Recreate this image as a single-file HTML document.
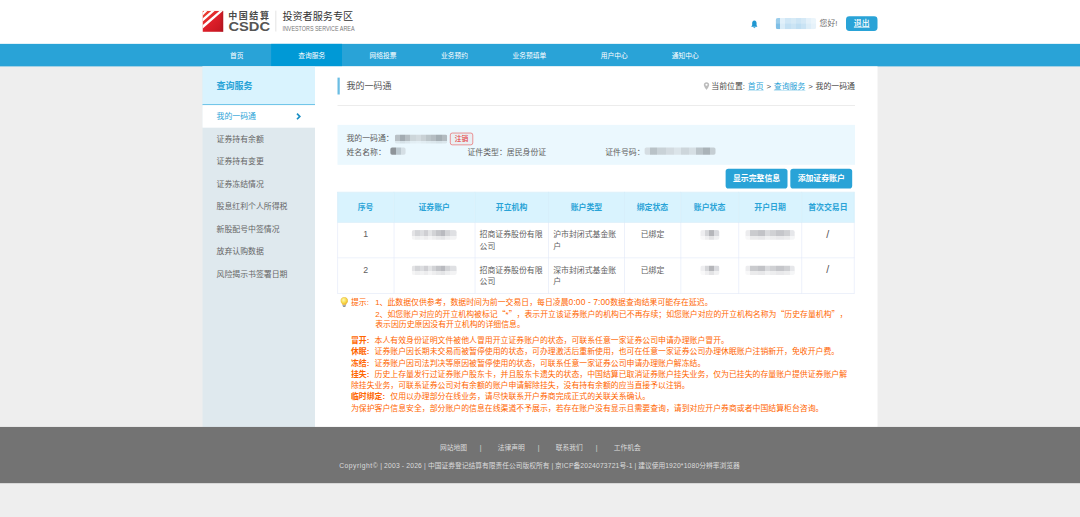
<!DOCTYPE html>
<html lang="zh-CN">
<head>
<meta charset="utf-8">
<title>我的一码通 - 投资者服务专区</title>
<style>
html,body{margin:0;padding:0;}
body{width:1080px;height:517px;overflow:hidden;background:#eeeeee;font-family:"Liberation Sans","Noto Sans CJK SC",sans-serif;}
#stage{position:absolute;left:0;top:0;width:1920px;height:919px;transform:scale(0.5625);transform-origin:0 0;background:#eeeeee;overflow:hidden;color:#606060;font-size:12px;}
#stage *{box-sizing:border-box;text-spacing-trim:space-all;}
.abs{position:absolute;white-space:nowrap;}
/* header */
#hdr{position:absolute;left:0;top:0;width:1920px;height:78px;background:#fff;}
#nav{position:absolute;left:0;top:78px;width:1920px;height:40.4px;background:#29a3d7;}
#nav .act{position:absolute;left:482px;top:0;width:126px;height:40.4px;background:#0099d6;}
#nav span{position:absolute;top:0;line-height:43px;color:#fff;font-size:12px;white-space:nowrap;}
/* logo */
#logo{position:absolute;left:359.5px;top:19px;width:37.5px;height:37.5px;}
.l1{left:405.7px;top:16.6px;font-size:16px;font-weight:700;color:#4a4a4a;line-height:24px;letter-spacing:2.8px;}
.l2{left:405.5px;top:36px;font-size:22px;font-weight:700;color:#555;line-height:24px;transform:scaleX(1.19);transform-origin:0 0;}
.ldiv{position:absolute;left:490px;top:19px;width:1px;height:37px;background:#ccc;}
.l3{left:502px;top:17px;font-size:18px;color:#333;line-height:24px;}
.l4{left:501.5px;top:43.6px;font-size:11.3px;color:#777;line-height:14px;transform:scaleX(0.85);transform-origin:0 0;}
/* user */
.hello{left:1457px;top:33px;font-size:14px;color:#707070;line-height:18px;}
.mask{position:absolute;border-radius:3px;}
.btn-exit{position:absolute;left:1504.4px;top:29px;width:55.2px;height:26px;background:#29a3d7;border-radius:6px;color:#fff;font-size:14px;font-weight:500;line-height:26.5px;text-align:center;text-decoration:underline;}
/* sidebar */
#side{position:absolute;left:360px;top:118px;width:200px;height:641px;background:#dfe9ee;}
#side .hd{position:absolute;left:0;top:0;width:200px;height:69px;background:#d9f3fe;border-bottom:2px solid #6cc3e8;}
#side .hd span{position:absolute;left:25px;top:24.4px;font-size:16px;font-weight:700;color:#29a3d7;line-height:24px;}
#side .it{position:absolute;left:0;width:200px;height:40px;line-height:40px;padding-left:25px;font-size:14px;color:#666;}
#side .it.on{background:#fff;color:#29a3d7;}
/* main */
#main{position:absolute;left:560px;top:118px;width:1000px;height:641px;background:#fff;}
.tbar{position:absolute;left:39.5px;top:20px;width:4px;height:30px;background:#6bbde3;}
.ttl{left:56px;top:24.4px;font-size:16px;color:#555;line-height:24px;}
.hr{position:absolute;left:40px;top:69px;width:920px;height:1px;background:#ddd;}
.crumb{right:40px;top:26px;font-size:14px;color:#484848;line-height:18px;word-spacing:1.15px;}
.crumb a{color:#29a3d7;text-decoration:underline;text-decoration-thickness:1px;text-decoration-color:rgba(41,163,215,.45);text-underline-offset:2px;}
.info{position:absolute;left:40px;top:104px;width:920px;height:71px;background:#ebf8fe;}
.info span{position:absolute;font-size:14px;color:#606060;line-height:24px;white-space:nowrap;}
.cancel{position:absolute;left:200px;top:13.5px;width:41px;height:22px;border:1.5px solid #e8474a;border-radius:4px;color:#e4393c;font-size:12px;font-weight:500;line-height:19px;text-align:center;background:#e9eff3;}
.btn{position:absolute;top:182px;width:110px;height:34.5px;background:#29a3d7;border-radius:5px;color:#fff;font-size:14px;font-weight:700;line-height:35.5px;text-align:center;}
/* table */
table{position:absolute;left:39.5px;top:223px;width:918.5px;border-collapse:collapse;table-layout:fixed;font-size:14px;color:#606060;}
th{height:53.5px;padding:0 0 1.5px;background:#d9f3fe;color:#29a3d7;font-weight:700;border:1px solid #cfeaf8;text-align:center;}
td{height:63px;border:1px solid #dfe6f7;text-align:center;vertical-align:top;padding:11.5px 8px 0;line-height:20px;}
td.n{font-size:15.5px;}
td.s{font-size:19px;color:#555;}
td.l{text-align:left;}
td i{display:inline-block;height:17px;border-radius:4px;margin-top:2px;vertical-align:top;}
td i.m1{background:linear-gradient(180deg,transparent 0 58%,rgba(255,255,255,.62) 58% 100%),linear-gradient(90deg,#e4e4e6 0 8%,#d4d5d8 8% 18%,#dcdde0 18% 27%,#cfcfd3 27% 36%,#e2e3e5 36% 45%,#d2d3d6 45% 55%,#c3c4c8 55% 65%,#b9babf 65% 75%,#d3d4d7 75% 86%,#dfe0e3 86% 100%);}
td i.m2{background:linear-gradient(180deg,transparent 0 58%,rgba(255,255,255,.62) 58% 100%),linear-gradient(90deg,#eeeef0 0 25%,#d5d6d9 25% 48%,#b5b6ba 48% 72%,#d9dade 72% 100%);}
td i.m3{background:linear-gradient(180deg,transparent 0 58%,rgba(255,255,255,.62) 58% 100%),linear-gradient(90deg,#ececee 0 10%,#cacbce 10% 25%,#c2c3c7 25% 40%,#d9dadd 40% 50%,#d0d1d4 50% 62%,#c5c6ca 62% 78%,#cfd0d3 78% 90%,#e6e7ea 90% 100%);}
/* tips */
.tips{position:absolute;left:0;top:0;color:#ff6600;font-size:14px;}
.tips div{position:absolute;white-space:nowrap;line-height:20px;left:64px;}
.tips b{font-weight:700;margin-right:5.4px;}
.d{font-size:15px;letter-spacing:.2px;}
.q{font-family:"Noto Sans CJK SC",sans-serif;}
/* footer */
#ftr{position:absolute;left:0;top:759px;width:1920px;height:100px;background:#737373;color:#dcdcdc;font-size:12px;}
#ftr span{position:absolute;white-space:nowrap;line-height:18px;}
#ftr em{font-style:normal;letter-spacing:.3px;}
</style>
</head>
<body>
<div id="stage">

<div id="hdr">
  <svg id="logo" viewBox="0 0 37.5 37.5">
    <defs><linearGradient id="lg" x1="0" y1="0" x2="1" y2="1"><stop offset="0" stop-color="#ee4a34"/><stop offset="0.45" stop-color="#e0202a"/><stop offset="1" stop-color="#c01420"/></linearGradient>
    <linearGradient id="lg2" x1="0" y1="0" x2="1" y2="0"><stop offset="0.8" stop-color="#8a1018" stop-opacity="0"/><stop offset="1" stop-color="#8a1018" stop-opacity="0.45"/></linearGradient></defs>
    <rect x="0" y="0" width="37.5" height="37.5" fill="url(#lg)"/>
    <rect x="0" y="0" width="37.5" height="37.5" fill="url(#lg2)"/>
    <path d="M0 3.5 L0 9 L9 0 L3.5 0 Z M0 14 L0 19.5 L22 0 L16 0 Z M0 26 L0 32 L36.5 0 L30.5 0 Z" fill="#fff"/>
    <path d="M36 0 L37.5 0 L37.5 2.2 L0 36 L0 34 Z" fill="#fff" opacity="0"/>
  </svg>
  <div class="abs l1">中国结算</div>
  <div class="abs l2">CSDC</div>
  <div class="ldiv"></div>
  <div class="abs l3">投资者服务专区</div>
  <div class="abs l4">INVESTORS SERVICE AREA</div>

  <svg class="abs" style="left:1335px;top:34.6px;width:12.2px;height:16.4px" viewBox="0 0 14 18"><path d="M7 1 C3.5 1 2.5 4 2.5 7 L2.5 11 L0.5 14 L13.5 14 L11.5 11 L11.5 7 C11.5 4 10.5 1 7 1 Z M5 15 L9 15 C9 17.5 5 17.5 5 15 Z" fill="#1f97d1"/></svg>
  <div class="mask" style="left:1378.5px;top:32px;width:72.5px;height:19.5px;border-radius:4px;background:linear-gradient(180deg,rgba(255,255,255,.22) 0 50%,transparent 50% 100%),linear-gradient(90deg,#7fbfe6 0 11%,#d9ecf8 11% 24%,#c3e0f3 24% 38%,#cbe4f4 38% 50%,#bfdef2 50% 63%,#c9e3f4 63% 76%,#dcedf8 76% 88%,#e6f2fa 88% 100%)"></div>
  <div class="abs hello">您好!</div>
  <div class="btn-exit">退出</div>
</div>

<div id="nav">
  <div class="act"></div>
  <span style="left:409px">首页</span>
  <span style="left:530px">查询服务</span>
  <span style="left:657px">网络投票</span>
  <span style="left:784px">业务预约</span>
  <span style="left:911px">业务预填单</span>
  <span style="left:1068px">用户中心</span>
  <span style="left:1194px">通知中心</span>
</div>

<div id="side">
  <div class="hd"><span>查询服务</span></div>
  <div class="it on" style="top:69px">我的一码通<svg style="position:absolute;left:166px;top:13px;width:10px;height:14px" viewBox="0 0 10 14"><path d="M2 2 L7 7 L2 12" fill="none" stroke="#1b8fc4" stroke-width="3"/></svg></div>
  <div class="it" style="top:109px">证券持有余额</div>
  <div class="it" style="top:149px">证券持有变更</div>
  <div class="it" style="top:189px">证券冻结情况</div>
  <div class="it" style="top:229px">股息红利个人所得税</div>
  <div class="it" style="top:269px">新股配号中签情况</div>
  <div class="it" style="top:309px">放弃认购数据</div>
  <div class="it" style="top:349px">风险揭示书签署日期</div>
</div>

<div id="main">
  <div class="tbar"></div>
  <div class="abs ttl">我的一码通</div>
  <div class="abs crumb"><svg style="width:12px;height:16px;vertical-align:-3px;margin-right:3px" viewBox="0 0 10 13"><path d="M5 0.8 C2.6 0.8 1 2.5 1 4.7 C1 7.4 5 12.2 5 12.2 C5 12.2 9 7.4 9 4.7 C9 2.5 7.4 0.8 5 0.8 Z" fill="#bcbcbc"/><circle cx="5" cy="4.6" r="1.6" fill="#fff"/></svg>当前位置: <a>首页</a> &gt; <a>查询服务</a> &gt; 我的一码通</div>
  <div class="hr"></div>

  <div class="info">
    <span style="left:16px;top:11.7px">我的一码通：</span>
    <div class="mask" style="left:102px;top:16.5px;width:93px;height:16px;background:linear-gradient(180deg,transparent 0 72%,rgba(235,248,254,.7) 72% 100%),linear-gradient(90deg,#b9c1c6 0 10%,#a3acb2 10% 20%,#b6bec3 20% 29%,#cdd6da 29% 40%,#d3dbdf 40% 50%,#c9d1d5 50% 60%,#bcc5c9 60% 70%,#b5bdc2 70% 79%,#a5aeb3 79% 90%,#b3bbc0 90% 100%)"></div>
    <div class="cancel">注销</div>
    <span style="left:16px;top:35.7px">姓名<span style="margin:0 1.6px">/</span>名称：</span>
    <div class="mask" style="left:93.5px;top:40px;width:27px;height:13px;background:linear-gradient(90deg,#8e9499 0 38%,#bcc8cf 38% 68%,#d5dfe5 68% 100%)"></div>
    <span style="left:231px;top:35.7px">证件类型：居民身份证</span>
    <span style="left:476px;top:35.7px">证件号码：</span>
    <div class="mask" style="left:546px;top:40px;width:126px;height:13px;background:linear-gradient(90deg,#d5dde2 0 8%,#b9c2c7 8% 18%,#c9d2d7 18% 30%,#d3dbe0 30% 42%,#dbe4e9 42% 52%,#cdd6db 52% 62%,#d6dfe4 62% 72%,#bac3c8 72% 82%,#aab3b8 82% 92%,#c5ced3 92% 100%)"></div>
  </div>

  <div class="btn" style="left:730px">显示完整信息</div>
  <div class="btn" style="left:845px">添加证券账户</div>

  <table>
    <colgroup><col style="width:100px"><col style="width:144px"><col style="width:131px"><col style="width:135px"><col style="width:100px"><col style="width:103px"><col style="width:112px"><col style="width:93.5px"></colgroup>
    <tr><th>序号</th><th>证券账户</th><th>开立机构</th><th>账户类型</th><th>绑定状态</th><th>账户状态</th><th>开户日期</th><th>首次交易日</th></tr>
    <tr><td class="n">1</td><td><i class="m1" style="width:80px"></i></td><td class="l">招商证券股份有限公司</td><td class="l">沪市封闭式基金账户</td><td>已绑定</td><td><i class="m2" style="width:34px"></i></td><td><i class="m3" style="width:88px"></i></td><td class="s">/</td></tr>
    <tr><td class="n">2</td><td><i class="m1" style="width:80px"></i></td><td class="l">招商证券股份有限公司</td><td class="l">深市封闭式基金账户</td><td>已绑定</td><td><i class="m2" style="width:34px"></i></td><td><i class="m3" style="width:88px"></i></td><td class="s">/</td></tr>
  </table>

  <div class="tips">
    <svg style="position:absolute;left:45px;top:409.5px;width:14px;height:18.5px" viewBox="0 0 14 18.5">
      <defs><radialGradient id="bg" cx="0.4" cy="0.35" r="0.7"><stop offset="0" stop-color="#fff6b0"/><stop offset="0.55" stop-color="#f7dc4a"/><stop offset="1" stop-color="#e9a92a"/></radialGradient></defs>
      <path d="M7 0.6 C3.2 0.6 0.7 3.3 0.7 6.6 C0.7 9 2.2 10.4 3.2 11.8 C3.7 12.5 3.9 13.2 4 13.8 L10 13.8 C10.1 13.2 10.3 12.5 10.8 11.8 C11.8 10.4 13.3 9 13.3 6.6 C13.3 3.3 10.8 0.6 7 0.6 Z" fill="url(#bg)" stroke="#e0b040" stroke-width="0.7"/>
      <path d="M4 14 L10 14 L9.6 16.6 L8.4 17.9 L5.6 17.9 L4.4 16.6 Z" fill="#8e9499"/>
      <path d="M4.2 15.2 L9.8 15.2" stroke="#d5d8db" stroke-width="0.7"/>
    </svg>
    <div style="left:64px;top:409px">提示:</div>
    <div style="left:107px;top:409px">1、此数据仅供参考，数据时间为前一交易日，每日凌晨<span class="d">0:00 - 7:00</span>数据查询结果可能存在延迟。</div>
    <div style="left:107px;top:429px">2、如您账户对应的开立机构被标记<span class="q">“</span>*<span class="q">”</span>，表示开立该证券账户的机构已不再存续；如您账户对应的开立机构名称为<span class="q">“</span>历史存量机构<span class="q">”</span>，</div>
    <div style="left:107px;top:449px">表示因历史原因没有开立机构的详细信息。</div>
    <div style="top:477px"><b>冒开:</b> 本人有效身份证明文件被他人冒用开立证券账户的状态，可联系任意一家证券公司申请办理账户冒开。</div>
    <div style="top:497px"><b>休眠:</b> 证券账户因长期未交易而被暂停使用的状态，可办理激活后重新使用，也可在任意一家证券公司办理休眠账户注销新开，免收开户费。</div>
    <div style="top:517px"><b>冻结:</b> 证券账户因司法判决等原因被暂停使用的状态，可联系任意一家证券公司申请办理账户解冻结。</div>
    <div style="top:537px"><b>挂失:</b> 历史上存量发行过证券账户股东卡，并且股东卡遗失的状态，中国结算已取消证券账户挂失业务，仅为已挂失的存量账户提供证券账户解</div>
    <div style="top:557px">除挂失业务，可联系证券公司对有余额的账户申请解除挂失，没有持有余额的应当直接予以注销。</div>
    <div style="top:577px"><b>临时绑定:</b> 仅用以办理部分在线业务，请尽快联系开户券商完成正式的关联关系确认。</div>
    <div style="top:597px">为保护客户信息安全，部分账户的信息在线渠道不予展示，若存在账户没有显示且需要查询，请到对应开户券商或者中国结算柜台咨询。</div>
  </div>
</div>

<div id="ftr">
  <span style="left:782px;top:27.8px">网站地图</span><span style="left:853px;top:27.8px">|</span>
  <span style="left:885px;top:27.8px">法律声明</span><span style="left:956px;top:27.8px">|</span>
  <span style="left:988px;top:27.8px">联系我们</span><span style="left:1059px;top:27.8px">|</span>
  <span style="left:1091px;top:27.8px">工作机会</span>
  <span style="left:603px;top:59.8px"><em style="letter-spacing:.9px">Copyright©</em><em> | 2003 - 2026 | </em>中国证券登记结算有限责任公司版权所有 | 京<em>ICP</em>备<em>2024073721</em>号<em>-1</em> | 建议使用<em>1920*1080</em>分辨率浏览器</span>
</div>

</div>
</body>
</html>
